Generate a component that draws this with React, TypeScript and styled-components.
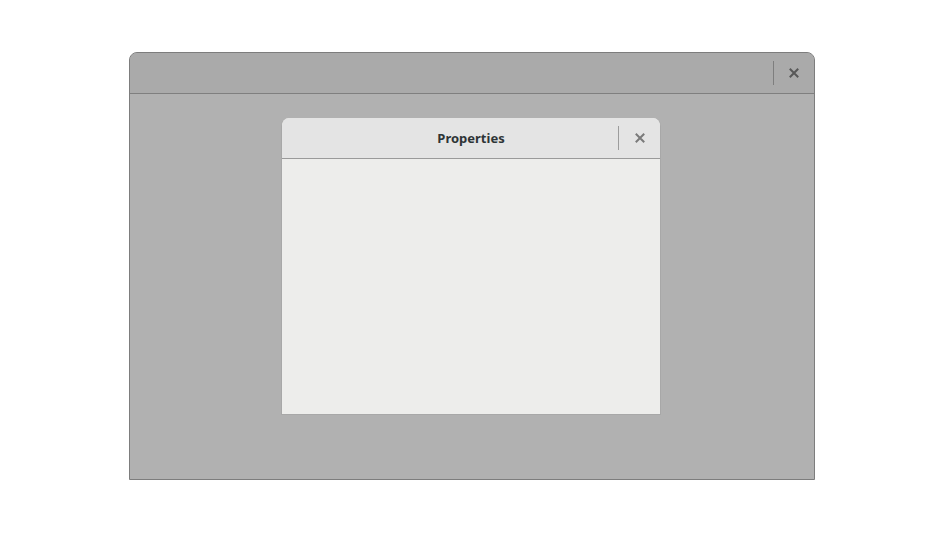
import * as React from "react";
import styled, { createGlobalStyle } from "styled-components";

const Global = createGlobalStyle`
  html, body {
    margin: 0;
    background: #ffffff;
    font-family: "Noto Sans", "Open Sans", sans-serif;
  }
`;

const Page = styled.div`
  width: 940px;
  height: 540px;
  padding: 52px 0 0 129px;
  box-sizing: border-box;
`;

const Window = styled.div`
  width: 686px;
  height: 428px;
  box-sizing: border-box;
  border: 1px solid #7d7d7d;
  border-radius: 8px 8px 0 0;
  background: #b1b1b1;
  display: flex;
  flex-direction: column;
  overflow: hidden;
`;

const HeaderBar = styled.div<{ light?: boolean }>`
  height: 41px;
  flex: none;
  box-sizing: border-box;
  display: flex;
  align-items: center;
  justify-content: flex-end;
  position: relative;
  background: ${p => (p.light ? "#e4e4e4" : "#aaaaaa")};
  border-bottom: 1px solid ${p => (p.light ? "#9a9a9a" : "#7f7f7f")};
`;

const Title = styled.div`
  position: absolute;
  inset: 0;
  display: flex;
  align-items: center;
  justify-content: center;
  font-size: 13px;
  font-weight: 700;
  color: #2e3436;
  pointer-events: none;
`;

const Separator = styled.div<{ light?: boolean }>`
  width: 1px;
  height: 24px;
  background: ${p => (p.light ? "#9c9c9c" : "#7e7e7e")};
`;

const CloseButton = styled.div<{ light?: boolean }>`
  width: ${p => (p.light ? "41px" : "40px")};
  height: 100%;
  display: flex;
  align-items: center;
  justify-content: center;
  position: relative;
  z-index: 1;
`;

const Content = styled.div`
  flex: 1;
  padding: 24px 0 0 151px;
`;

const Dialog = styled.div`
  width: 380px;
  height: 297px;
  box-sizing: border-box;
  border: 1px solid #a8a8a8;
  border-top: none;
  border-radius: 8px 8px 0 0;
  background: #ededeb;
  display: flex;
  flex-direction: column;
  overflow: hidden;
`;

const CloseIcon: React.FC<{ color: string }> = ({ color }) => (
  <svg width="10" height="10" viewBox="0 0 10 10">
    <path
      d="M1.5 1.5 L8.5 8.5 M8.5 1.5 L1.5 8.5"
      stroke={color}
      strokeWidth="2"
      strokeLinecap="square"
    />
  </svg>
);

const App: React.FC = () => (
  <>
    <Global />
    <Page>
      <Window>
        <HeaderBar>
          <Separator />
          <CloseButton>
            <CloseIcon color="#585858" />
          </CloseButton>
        </HeaderBar>
        <Content>
          <Dialog>
            <HeaderBar light>
              <Title>Properties</Title>
              <Separator light />
              <CloseButton light>
                <CloseIcon color="#7a7a7a" />
              </CloseButton>
            </HeaderBar>
          </Dialog>
        </Content>
      </Window>
    </Page>
  </>
);

export default App;
